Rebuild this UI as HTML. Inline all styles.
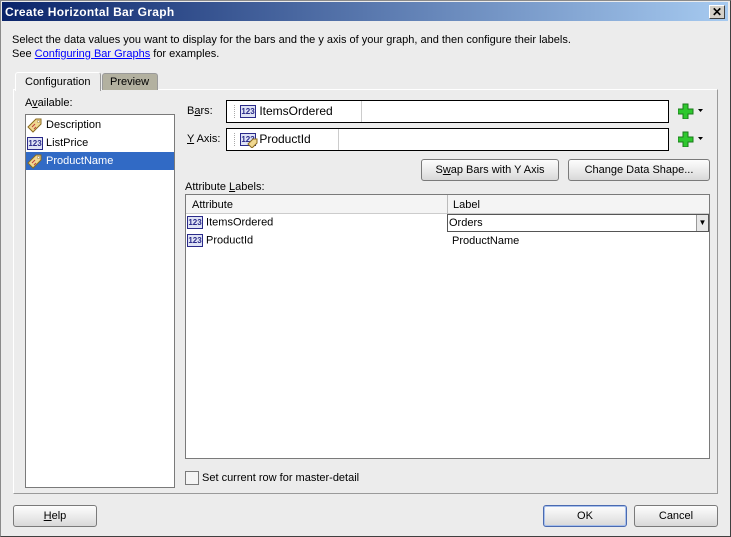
<!DOCTYPE html>
<html><head><meta charset="utf-8"><style>
*{box-sizing:border-box;margin:0;padding:0}
body{width:731px;height:537px;background:#ececec;font-family:"Liberation Sans",sans-serif;font-size:11px;color:#000;position:relative;overflow:hidden}
.a{position:absolute}
.frame{left:0;top:0;width:731px;height:537px;border:1px solid #8a8a8a;border-right-color:#404040;border-bottom-color:#404040}
.title{left:2px;top:2px;width:726px;height:19px;background:linear-gradient(90deg,#0a246a,#a6caf0);color:#fff;font-weight:bold;font-size:12px;padding:3px 3px;letter-spacing:0.3px}
.close{left:709px;top:5px;width:16px;height:14px;background:#d4d0c8;border:1px solid;border-color:#fff #404040 #404040 #fff;font-size:12px;font-weight:bold;text-align:center;line-height:12px}
.btn{border:1px solid #7a7a7a;border-radius:3px;background:linear-gradient(#fdfdfd,#e8e8e8 60%,#d8d8d8);text-align:center;line-height:21px}
.field{background:#fff;border:1px solid #000}
.ic{display:inline-block;width:16px;height:13px;border:1px solid #2a2a8a;background:#dfe3f5;font-size:8px;line-height:11px;text-align:center;color:#2a2a8a;vertical-align:middle;font-weight:bold}
.tag{display:inline-block;width:16px;height:16px;vertical-align:middle}
.row{height:18px;line-height:18px;padding-left:1px}
</style></head><body>
<div class="a frame"></div>
<div class="a title">Create Horizontal Bar Graph</div>
<div class="a close">✕</div>
<div class="a" style="left:12px;top:33px;line-height:14px">Select the data values you want to display for the bars and the y axis of your graph, and then configure their labels.<br>See <span style="color:#00f;text-decoration:underline">Configuring Bar Graphs</span> for examples.</div>
<div class="a" style="left:13px;top:89px;width:705px;height:405px;border:1px solid #fff;border-right-color:#9a9a9a;border-bottom-color:#9a9a9a"></div>
<div class="a" style="left:15px;top:72px;width:86px;height:19px;background:#ececec;border:1px solid #9a9a9a;border-bottom:none;border-left-color:#fff;border-top-color:#fff;border-radius:3px 3px 0 0;padding:3px 0 0 9px">Configuration</div>
<div class="a" style="left:102px;top:73px;width:56px;height:17px;background:#b3b1a0;border:1px solid #9a9a9a;border-bottom:none;border-radius:3px 3px 0 0;padding:2px 0 0 7px">Preview</div>
<div class="a" style="left:25px;top:97px">A<u>v</u>ailable:</div>
<div class="a field" style="left:25px;top:114px;width:150px;height:374px;border-color:#7a7a7a;padding-top:1px">
<div class="row"><svg class="tag" viewBox="0 0 16 16"><path d="M1 10L9 2h5v5L6 15z" fill="#f0d890" stroke="#8a6a20"/><circle cx="11.5" cy="4.5" r="1.2" fill="#fff" stroke="#8a6a20" stroke-width=".5"/><path d="M5 10l3-3M7 12l2-2" stroke="#c04040"/></svg> Description</div>
<div class="row"><span class="ic">123</span> ListPrice</div>
<div class="row" style="background:#316ac5;color:#fff"><svg class="tag" viewBox="0 0 16 16"><path d="M1 10L9 2h5v5L6 15z" fill="#f0d890" stroke="#8a6a20"/><circle cx="11.5" cy="4.5" r="1.2" fill="#fff" stroke="#8a6a20" stroke-width=".5"/><path d="M5 10l3-3M7 12l2-2" stroke="#c04040"/></svg> ProductName</div>
</div>
<div class="a" style="left:187px;top:105px">B<u>a</u>rs:</div>
<div class="a" style="left:187px;top:133px"><u>Y</u> Axis:</div>
<div class="a field" style="left:226px;top:100px;width:443px;height:23px"><div class="a" style="left:7px;top:4px;height:13px;border-left:1px dotted #aaa"></div><div class="a" style="left:13px;top:3px;font-size:12px"><span class="ic">123</span> ItemsOrdered</div><div class="a" style="left:134px;top:0;height:21px;border-left:1px solid #ccc"></div></div>
<div class="a field" style="left:226px;top:128px;width:443px;height:23px"><div class="a" style="left:7px;top:4px;height:13px;border-left:1px dotted #aaa"></div><div class="a" style="left:13px;top:3px;font-size:12px"><span class="ic">123</span> ProductId</div><svg class="a" style="left:20px;top:8px" width="11" height="11" viewBox="0 0 11 11"><path d="M1 7L6 2h4v4L5 11z" fill="#f0d890" stroke="#8a6a20"/></svg><div class="a" style="left:111px;top:0;height:21px;border-left:1px solid #ccc"></div></div>
<svg class="a" style="left:678px;top:103px" width="26" height="16" viewBox="0 0 26 16"><path d="M5 1h5v5h5v5h-5v5H5v-5H0V6h5z" fill="#2ec82e" stroke="#1a7a1a"/><path d="M20 6h5l-2.5 3z" fill="#000"/></svg>
<svg class="a" style="left:678px;top:131px" width="26" height="16" viewBox="0 0 26 16"><path d="M5 1h5v5h5v5h-5v5H5v-5H0V6h5z" fill="#2ec82e" stroke="#1a7a1a"/><path d="M20 6h5l-2.5 3z" fill="#000"/></svg>
<div class="a btn" style="left:421px;top:159px;width:138px;height:22px">S<u>w</u>ap Bars with Y Axis</div>
<div class="a btn" style="left:568px;top:159px;width:142px;height:22px">Change Data Shape...</div>
<div class="a" style="left:185px;top:181px">Attribute <u>L</u>abels:</div>
<div class="a field" style="left:185px;top:194px;width:525px;height:265px;border-color:#7a7a7a">
<div class="a" style="left:0;top:0;width:523px;height:19px;background:#f4f4f4;border-bottom:1px solid #ccc"></div>
<div class="a" style="left:261px;top:0;height:19px;border-left:1px solid #bbb"></div>
<div class="a" style="left:6px;top:4px">Attribute</div>
<div class="a" style="left:267px;top:4px">Label</div>
<div class="a" style="left:1px;top:21px"><span class="ic">123</span> ItemsOrdered</div>
<div class="a" style="left:1px;top:39px"><span class="ic">123</span> ProductId</div>
<div class="a" style="left:261px;top:19px;width:262px;height:18px;border:1px solid #555;padding:2px 1px">Orders</div>
<div class="a" style="left:510px;top:20px;width:12px;height:16px;background:#e8e8e8;border-left:1px solid #999;font-size:8px;text-align:center;line-height:16px">▼</div>
<div class="a" style="left:266px;top:40px">ProductName</div>
</div>
<div class="a" style="left:185px;top:471px;width:14px;height:14px;border:1px solid #7a7a7a;background:#f4f4f4"></div>
<div class="a" style="left:202px;top:472px">Set current row for master-detail</div>
<div class="a btn" style="left:13px;top:505px;width:84px;height:22px"><u>H</u>elp</div>
<div class="a btn" style="left:543px;top:505px;width:84px;height:22px;border-color:#4a6ab0;box-shadow:inset 0 0 0 1px #a8c0ec">OK</div>
<div class="a btn" style="left:634px;top:505px;width:84px;height:22px">Cancel</div>
</body></html>
